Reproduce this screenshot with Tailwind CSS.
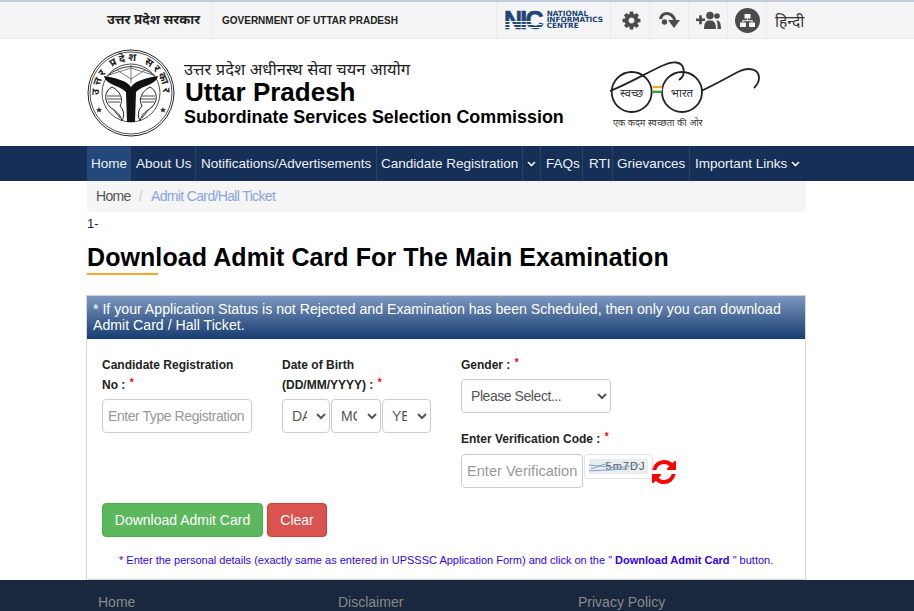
<!DOCTYPE html>
<html lang="en">
<head>
<meta charset="utf-8">
<title>UPSSSC</title>
<script src="https://cdn.jsdelivr.net/npm/@tailwindcss/browser@4"></script>
</head>
<body class="w-[914px] h-[611px] overflow-hidden bg-white font-['Liberation_Sans','Noto_Sans',sans-serif] text-[14px] text-black">
<!-- top bar -->
<div class="h-[39px] bg-[#f4f4f4] border-t-2 border-t-[#c3cadf] border-b border-b-[#e9e9e9] flex items-center">
  <div class="ml-[107px] w-[105px] h-full flex items-center border-r border-[#eaeaea] text-[13.300px] font-bold text-[#222] whitespace-nowrap">उत्तर प्रदेश सरकार</div>
  <div class="ml-[10px] w-[274px] h-full flex items-center text-[10px] font-bold text-[#222] whitespace-nowrap">GOVERNMENT OF UTTAR PRADESH</div>
  <div class="w-[115px] h-full flex items-center gap-[5px] border-x border-[#eaeaea] pl-[7px]">
    <div class="relative h-[18px] leading-[18px] text-[25px] font-bold tracking-[-1.800px] text-[#1c4477] [-webkit-text-stroke:0.6px_#1c4477]">NIC
      <div class="absolute inset-x-0 bottom-0 h-[9px] flex flex-col justify-around"><div class="h-px bg-[#f4f4f4]"></div><div class="h-px bg-[#f4f4f4]"></div><div class="h-px bg-[#f4f4f4]"></div></div>
    </div>
    <div class="text-[7.300px] leading-[6px] font-bold text-[#1c4477] font-['DejaVu_Sans'] whitespace-nowrap">NATIONAL<br>INFORMATICS<br>CENTRE</div>
  </div>
  <div class="w-[39px] h-full flex items-center justify-center border-r border-[#eaeaea] pl-[2px]">
    <svg class="w-[21px] h-[21px]" viewBox="0 0 1792 1792" fill="#4b4b4b"><path d="M1152 896q0-106-75-181t-181-75-181 75-75 181 75 181 181 75 181-75 75-181zm512-109v222q0 12-8 23t-20 13l-185 28q-19 54-39 91 35 50 107 138 10 12 10 25t-9 23q-27 37-99 108t-94 71q-12 0-26-9l-138-108q-44 23-91 38-16 136-29 186-7 28-36 28h-222q-14 0-24.5-8.5t-11.5-21.5l-28-184q-49-16-90-37l-141 107q-10 9-25 9-14 0-25-11-126-114-165-168-7-10-7-23 0-12 8-23 15-21 51-66.5t54-70.5q-27-50-41-99l-183-27q-13-2-21-12.5t-8-23.5v-222q0-12 8-23t19-13l186-28q14-46 39-92-40-57-107-138-10-12-10-24 0-10 9-23 26-36 98.5-107.5t94.5-71.5q13 0 26 10l138 107q44-23 91-38 16-136 29-186 7-28 36-28h222q14 0 24.5 8.5t11.5 21.5l28 184q49 16 90 37l142-107q9-9 24-9 13 0 25 10 129 119 165 170 7 8 7 22 0 12-8 23-15 21-51 66.5t-54 70.5q26 50 41 98l183 28q13 2 21 12.5t8 23.5z"/></svg>
  </div>
  <div class="w-[39px] h-full flex items-center justify-center border-r border-[#eaeaea] pl-[2px]">
    <svg class="w-[22px] h-[20px]" viewBox="0 0 22 20" fill="none"><circle cx="5.500" cy="12" r="2.700" fill="#4b4b4b"/><path d="M1.500 9 C3 2 12 1 16 10" stroke="#4b4b4b" stroke-width="3"/><path d="M9 10 L21 10 L15 18 Z" fill="#4b4b4b"/></svg>
  </div>
  <div class="w-[39px] h-full flex items-center justify-center border-r border-[#eaeaea]">
    <svg class="w-[25px] h-[19px]" viewBox="0 0 25 19" fill="#4b4b4b"><rect x="0" y="7.500" width="9" height="2.600"/><rect x="3.200" y="4.300" width="2.600" height="9"/><circle cx="14" cy="4.500" r="3.800"/><circle cx="21" cy="5" r="2.800"/><path d="M8 18 C8 11 10.500 9.500 14 9.500 C17.500 9.500 20 11 20 18 Z"/><path d="M20.500 9.500 C23 9 25 11 25 18 H21.500 C21.500 14 21.500 11.500 20.500 9.500 Z"/></svg>
  </div>
  <div class="w-[39px] h-full flex items-center justify-center border-r border-[#eaeaea]">
    <svg class="w-[25px] h-[25px]" viewBox="0 0 25 25"><circle cx="12.500" cy="12.500" r="12.500" fill="#4b4b4b"/><g fill="#f4f4f4"><rect x="9.500" y="6" width="6" height="4.500"/><rect x="5" y="14.500" width="6" height="4.500"/><rect x="14" y="14.500" width="6" height="4.500"/><rect x="12" y="10.500" width="1" height="2"/><rect x="7.500" y="12.200" width="10" height="1"/><rect x="7.500" y="12.200" width="1" height="2.500"/><rect x="16.500" y="12.200" width="1" height="2.500"/></g></svg>
  </div>
  <div class="ml-[8px] pt-[4px] text-[15.500px] text-[#333] whitespace-nowrap">हिन्दी</div>
</div>
<!-- masthead -->
<div class="h-[107px] flex items-start pl-[87px]">
  <svg class="w-[88px] h-[88px] mt-[10px] shrink-0" viewBox="0 0 88 88">
    <circle cx="44" cy="44" r="43" fill="#fff" stroke="#222" stroke-width="1"/>
    <circle cx="44" cy="44" r="41" fill="none" stroke="#222" stroke-width="0.800"/>
    <circle cx="44" cy="44" r="29" fill="none" stroke="#222" stroke-width="0.800"/>
    <defs><path id="arc" d="M14 55 A32 32 0 1 1 74 55"/></defs>
    <text font-size="10.500" font-weight="700" letter-spacing="2.600" fill="#222"><textPath href="#arc" startOffset="50%" text-anchor="middle">उत्तर प्रदेश सरकार</textPath></text>
    <path d="M20 27 Q44 8 68 27" fill="none" stroke="#333" stroke-width="1"/>
    <path d="M22 26 L44 19 L66 26 M44 16 V34 M30 21 L44 30 L58 21" fill="none" stroke="#444" stroke-width="0.700"/>
    <path d="M17 27 C28 29 39 31 44 38 C49 31 60 29 71 27 C69 36 56 36 49 43 L48 73 H40 L39 43 C32 36 19 36 17 27 Z" fill="#111"/>
    <path d="M25 38 C17 42 17 52 23 58 C28 62 33 64 35 72 C37 68 38 62 33 57 C37 50 33 42 25 38 Z M63 38 C71 42 71 52 65 58 C60 62 55 64 53 72 C51 68 50 62 55 57 C51 50 55 42 63 38 Z" fill="#fff" stroke="#222" stroke-width="1"/>
    <path d="M20 47 H33 M20 50 H34 M21 53 H33 M55 47 H68 M54 50 H68 M55 53 H67 M26 60 L33 69 M62 60 L55 69" stroke="#333" stroke-width="0.900"/>
    <path d="M12 58 l.9 1.900 2.100 .3 -1.500 1.400 .4 2 -1.900 -1 -1.900 1 .4 -2 -1.500 -1.400 2.100 -.3 z M76 58 l.9 1.900 2.100 .3 -1.500 1.400 .4 2 -1.900 -1 -1.900 1 .4 -2 -1.500 -1.400 2.100 -.3 z" fill="#333"/>
  </svg>
  <div class="ml-[9px] pt-[18px]">
    <div class="text-[16.500px] leading-[24px] text-[#222] whitespace-nowrap">उत्तर प्रदेश अधीनस्थ सेवा चयन आयोग</div>
    <div class="pl-px text-[26px] leading-[23px] font-bold whitespace-nowrap">Uttar Pradesh</div>
    <div class="text-[17.900px] leading-[26px] font-bold whitespace-nowrap">Subordinate Services Selection Commission</div>
  </div>
  <svg class="w-[152px] h-[76px] mt-[21px] ml-[46px] shrink-0" viewBox="0 0 152 76" fill="none">
    <circle cx="21.700" cy="32" r="20" stroke="#222" stroke-width="1.800"/>
    <circle cx="72" cy="32" r="20" stroke="#222" stroke-width="1.800"/>
    <path d="M0 31 C18 24 38 12 54 5 C62 1 72 1 73.500 9 C74.500 14 72 18 69 20" stroke="#222" stroke-width="1.800"/>
    <path d="M91 31 C104 25 118 17 130 11 C139 7 149 9 149 18 C149 22 147 25 144 28" stroke="#222" stroke-width="1.800"/>
    <rect x="42.700" y="26" width="9.500" height="2.400" fill="#f7a428"/><rect x="42.700" y="28.400" width="9.500" height="2.200" fill="#fff"/><rect x="42.700" y="30.600" width="9.500" height="2.400" fill="#3e9b43"/>
    <text x="21.700" y="37" text-anchor="middle" font-size="11.500" fill="#333">स्वच्छ</text>
    <text x="72" y="37" text-anchor="middle" font-size="11.500" fill="#333">भारत</text>
    <text x="47.700" y="66" text-anchor="middle" font-size="9.300" fill="#333">एक कदम स्वच्छता की ओर</text>
  </svg>
</div>
<!-- nav -->
<nav class="h-[35px] bg-[#152f57] flex pl-[87px] text-[13.500px] text-[#eef2f7] whitespace-nowrap">
  <a class="w-[44px] pl-[4px] flex items-center bg-[#24487a]"><span class="pt-[1px]">Home</span></a>
  <a class="w-[65px] pl-[5px] flex items-center border-r border-[#1d4a5c]"><span class="pt-[1px]">About Us</span></a>
  <a class="w-[181px] pl-[5px] flex items-center border-r border-[#1d4a5c]"><span class="pt-[1px]">Notifications/Advertisements</span></a>
  <a class="w-[146px] pl-[4px] flex items-center border-r border-[#1d4a5c]"><span class="pt-[1px]">Candidate Registration</span></a>
  <a class="w-[18px] flex items-center justify-center border-r border-[#1d4a5c]"><svg class="w-[9px] h-[6px]" viewBox="0 0 9 6" fill="none" stroke="#eef2f7" stroke-width="1.600"><path d="M1 1 L4.500 4.500 L8 1"/></svg></a>
  <a class="w-[42px] pl-[5px] flex items-center border-r border-[#1d4a5c]"><span class="pt-[1px]">FAQs</span></a>
  <a class="w-[30px] pl-[6px] flex items-center border-r border-[#1d4a5c]"><span class="pt-[1px]">RTI</span></a>
  <a class="w-[77px] pl-[4px] flex items-center border-r border-[#1d4a5c]"><span class="pt-[1px]">Grievances</span></a>
  <a class="pl-[5px] flex items-center gap-[4px]"><span class="pt-[1px]">Important Links</span> <svg class="w-[9px] h-[6px]" viewBox="0 0 9 6" fill="none" stroke="#eef2f7" stroke-width="1.600"><path d="M1 1 L4.500 4.500 L8 1"/></svg></a>
</nav>
<main class="ml-[86px] w-[720px]">
  <div class="ml-px h-[31px] bg-[#f5f5f5] rounded-b-[4px] flex items-center pl-[9px] text-[14px] tracking-[-0.650px]">
    <span class="text-[#555]">Home</span><span class="mx-[8px] text-[#ccc]">/</span><span class="ml-px text-[#8aa4e0]">Admit Card/Hall Ticket</span>
  </div>
  <div class="ml-px h-[22px] pt-[1px] flex items-center text-[13px] text-[#1a1a4a]">1-</div>
  <h1 class="ml-px mt-[8px] text-[25px] leading-[30px] font-bold tracking-[0.080px]">Download Admit Card For The Main Examination</h1>
  <div class="ml-px mt-[1px] w-[71px] h-[2px] bg-[#f5a623]"></div>
  <section class="mt-[20px] border-x border-b border-[#d8d8d8] h-[285px]">
    <div class="h-[44px] bg-gradient-to-b from-[#7d98bf] to-[#173d72] text-white text-[14.150px] leading-[16px] px-[6px] pt-[5px] border-t border-[#c9d2de]">* If your Application Status is not Rejected and Examination has been Scheduled, then only you can download Admit Card / Hall Ticket.</div>
    <div class="flex pl-[15px] pt-[16px] h-[146px]">
      <div class="w-[180px]">
        <div class="w-[150px] text-[12px] leading-[20px] font-bold text-[#222]">Candidate Registration No : <span class="relative -top-[3px] ml-px text-[#f00] text-[10px]">*</span></div>
        <input class="mt-[3px] w-[150px] h-[34px] border border-[#ccc] rounded-[4px] px-[5px] text-[14px] tracking-[-0.430px] placeholder:text-[#999] bg-white" placeholder="Enter Type Registration">
      </div>
      <div class="w-[179px]">
        <div class="text-[12px] leading-[20px] font-bold text-[#222]">Date of Birth<br>(DD/MM/YYYY) : <span class="relative -top-[3px] ml-px text-[#f00] text-[10px]">*</span></div>
        <div class="mt-[3px] flex gap-px">
          <select class="w-[48px] h-[34px] border border-[#ccc] rounded-[4px] pl-[5px] pr-[6px] text-[14px] text-[#555] bg-white"><option>DAY</option></select>
          <select class="w-[50px] h-[34px] border border-[#ccc] rounded-[4px] pl-[5px] pr-[7px] text-[14px] text-[#555] bg-white"><option>MONTH</option></select>
          <select class="w-[49px] h-[34px] border border-[#ccc] rounded-[4px] pl-[5px] pr-[7px] text-[14px] text-[#555] bg-white"><option>YEAR</option></select>
        </div>
      </div>
      <div>
        <div class="text-[12px] leading-[20px] font-bold text-[#222]">Gender : <span class="relative -top-[3px] ml-px text-[#f00] text-[10px]">*</span></div>
        <select class="mt-[3px] block w-[150px] h-[34px] border border-[#ccc] rounded-[4px] pl-[5px] text-[14px] tracking-[-0.440px] text-[#555] bg-white"><option>Please Select...</option></select>
        <div class="mt-[16px] text-[12px] leading-[20px] font-bold text-[#222]">Enter Verification Code : <span class="relative -top-[3px] ml-px text-[#f00] text-[10px]">*</span></div>
        <div class="mt-[4px] flex items-start">
          <input class="w-[122px] h-[34px] border border-[#ccc] rounded-[4px] pl-[5px] pr-0 text-[14.600px] placeholder:text-[#999] bg-white" placeholder="Enter Verification">
          <div class="ml-px w-[69px] h-[25px] border border-[#e4e4e4] rounded-[3px] bg-white p-[4px] shrink-0">
            <div class="relative h-full bg-[#e9edf0] overflow-hidden text-[11px] leading-[15px] text-center tracking-[1px] text-[#555] pl-[14px]">5m7DJ
              <svg class="absolute inset-0 w-full h-full" viewBox="0 0 60 15" fill="none" stroke="#7aa3c4" stroke-width="1"><path d="M0 6 L30 9 L52 5 M2 10 L22 3 M0 12 L40 10"/></svg>
            </div>
          </div>
          <svg class="w-[28px] h-[28px] mt-[4px] -ml-[3px] shrink-0" viewBox="0 0 1792 1792" fill="#ff0000"><path d="M1639 1056q0 5-1 7-64 268-268 434.5t-478 166.5q-146 0-282.5-55t-243.5-157l-129 129q-19 19-45 19t-45-19-19-45v-448q0-26 19-45t45-19h448q26 0 45 19t19 45-19 45l-137 137q71 66 161 102t187 36q134 0 250-65t186-179q11-17 53-117 8-23 30-23h192q13 0 22.5 9.5t9.5 22.5zm25-800v448q0 26-19 45t-45 19h-448q-26 0-45-19t-19-45 19-45l138-138q-148-137-349-137-134 0-250 65t-186 179q-11 17-53 117-8 23-30 23h-199q-13 0-22.5-9.5t-9.5-22.5v-7q65-268 270-434.5t480-166.5q146 0 284 55.5t245 156.5l130-129q19-19 45-19t45 19 19 45z"/></svg>
        </div>
      </div>
    </div>
    <div class="flex gap-[4px] pl-[15px] mt-[18px]">
      <button class="w-[161px] h-[34px] bg-[#5cb85c] border border-[#4cae4c] rounded-[4px] text-white text-[14px]">Download Admit Card</button>
      <button class="w-[60px] h-[34px] bg-[#d9534f] border border-[#d43f3a] rounded-[4px] text-white text-[14px]">Clear</button>
    </div>
    <p class="mt-[13px] pl-[32px] text-[11px] leading-[20px] text-[#3300ee] whitespace-nowrap">* Enter the personal details (exactly same as entered in UPSSSC Application Form) and click on the " <b>Download Admit Card</b> " button.</p>
  </section>
</main>
<footer class="h-[31px] bg-[#19283e] flex pt-[13px] pl-[98px] text-[14px] leading-[18px] text-[#8a8a8a]">
  <div class="w-[240px]">Home</div><div class="w-[240px]">Disclaimer</div><div>Privacy Policy</div>
</footer>
</body>
</html>
